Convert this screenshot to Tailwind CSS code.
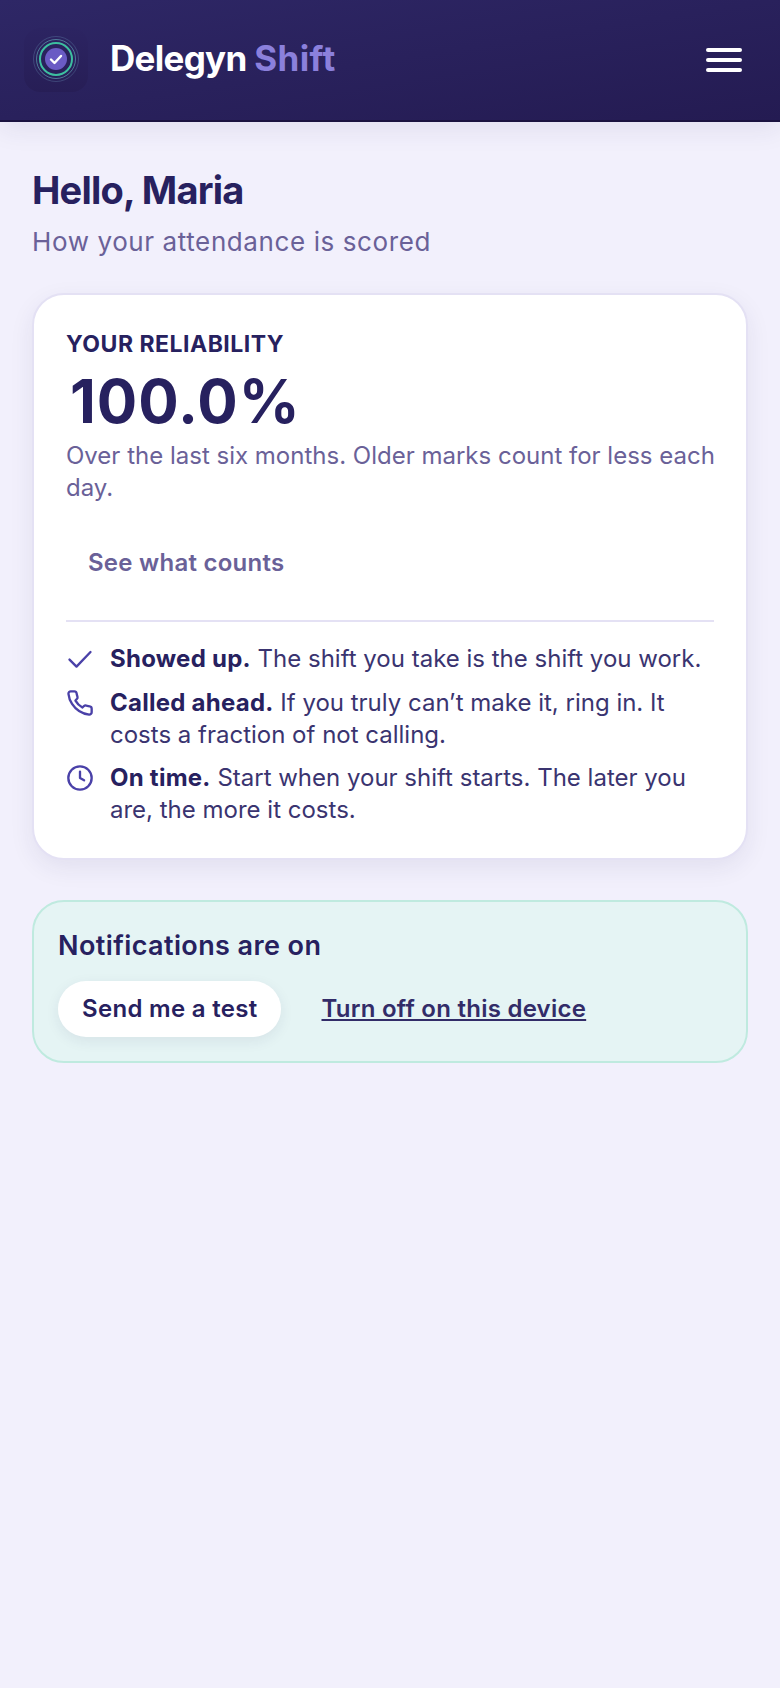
<!DOCTYPE html>
<html lang="en">
  <head>
    <meta charset="UTF-8" />
    <meta name="viewport" content="width=device-width, initial-scale=1.0" />
    <script src="https://cdn.jsdelivr.net/npm/@tailwindcss/browser@4"></script>
    <title>Delegyn Shift</title>
  </head>
  <body class="min-h-[1688px] bg-[#f2f0fc] font-['Inter',sans-serif] text-[#27215f]">
    <!-- Header -->
    <header class="h-[122px] flex items-center justify-between pl-6 pr-[38px] bg-gradient-to-br from-[#2e2766] to-[#241b52] border-b-2 border-[#1a1240] shadow-[0_8px_24px_rgba(39,33,95,0.08)]">
      <div class="flex items-center gap-[22px]">
        <div class="w-16 h-16 rounded-[16px] bg-gradient-to-b from-[#2c2462] to-[#271e56] flex items-center justify-center">
          <svg class="w-[50px] h-[50px] mb-[2px]" viewBox="0 0 50 50" fill="none">
            <circle cx="25" cy="25" r="22.5" stroke="#5f7fa8" stroke-opacity="0.4" stroke-width="1" />
            <circle cx="25" cy="25" r="19.5" stroke="#5f9fb0" stroke-opacity="0.7" stroke-width="1" />
            <circle cx="25" cy="25" r="16" stroke="#3dbfa0" stroke-width="2" />
            <circle cx="25" cy="25" r="11" fill="#6a5bc4" />
            <path d="M20 25.5l3.5 3.5 6.5-7" stroke="#fff" stroke-width="2.4" stroke-linecap="round" stroke-linejoin="round" />
          </svg>
        </div>
        <div class="mb-1 text-[35px] leading-[44px] font-bold tracking-[-0.7px] text-white">Delegyn <span class="tracking-[0.4px] text-[#8b80dc]">Shift</span></div>
      </div>
      <div class="flex flex-col gap-1.5">
        <div class="w-9 h-1 rounded-full bg-white"></div>
        <div class="w-9 h-1 rounded-full bg-white"></div>
        <div class="w-9 h-1 rounded-full bg-white"></div>
      </div>
    </header>

    <main class="px-8 pt-[45px]">
      <h1 class="text-[38px] leading-[46px] font-bold tracking-[-0.8px]">Hello, Maria</h1>
      <p class="mt-[11px] text-[26px] leading-[36px] tracking-[0.6px] text-[#6a6198]">How your attendance is scored</p>

      <!-- Reliability card -->
      <section class="mt-[33px] bg-white rounded-[32px] border-2 border-[#e4e1f4] px-[32px] pt-[35px] pb-[32px] shadow-[0_8px_24px_rgba(39,33,95,0.08)]">
        <div class="text-[23px] leading-[28px] tracking-[0.5px] font-bold">YOUR RELIABILITY</div>
        <div class="mt-[7px] text-[60px] leading-[72px] tracking-[1px] font-bold pl-1">100.0%</div>
        <p class="mt-[3px] -mr-1 text-[24px] leading-[32px] text-[#6a6198]">Over the last six months. Older marks count for less each day.</p>
        <div class="mt-[34px] pl-[22px] text-[24px] leading-[50px] tracking-[0.25px] font-semibold text-[#6a6198]">See what counts</div>
        <div class="mt-[32px] pt-[21px] border-t-2 border-[#e4e1f4] flex flex-col gap-[11.5px]">
          <div class="flex gap-[16px]">
            <svg class="w-7 h-7 mt-[2px] shrink-0" viewBox="0 0 24 24" fill="none" stroke="#4a41a8" stroke-width="2" stroke-linecap="round" stroke-linejoin="round"><path d="M3 12.5l6 6L21 6" /></svg>
            <p class="text-[24px] leading-[32px] text-[#3a3470]"><b class="text-[#27215f] tracking-[0.25px]">Showed up.</b> The shift you take is the shift you work.</p>
          </div>
          <div class="flex gap-[16px]">
            <svg class="w-7 h-7 mt-[2px] shrink-0" viewBox="0 0 24 24" fill="none" stroke="#4a41a8" stroke-width="2" stroke-linecap="round" stroke-linejoin="round"><path d="M22 16.9v3a2 2 0 0 1-2.2 2 19.8 19.8 0 0 1-8.6-3.1 19.5 19.5 0 0 1-6-6 19.8 19.8 0 0 1-3.1-8.7A2 2 0 0 1 4.1 2h3a2 2 0 0 1 2 1.7c.1 1 .4 1.9.7 2.8a2 2 0 0 1-.5 2.1L8.1 9.9a16 16 0 0 0 6 6l1.3-1.3a2 2 0 0 1 2.1-.4c.9.3 1.8.6 2.8.7a2 2 0 0 1 1.7 2z" /></svg>
            <p class="text-[24px] leading-[32px] text-[#3a3470]"><b class="text-[#27215f] tracking-[0.25px]">Called ahead.</b> If you truly can’t make it, ring in. It costs a fraction of not calling.</p>
          </div>
          <div class="flex gap-[16px]">
            <svg class="w-7 h-7 mt-[2px] shrink-0" viewBox="0 0 24 24" fill="none" stroke="#4a41a8" stroke-width="2" stroke-linecap="round" stroke-linejoin="round"><circle cx="12" cy="12" r="10" /><path d="M12 6.5V12l3.5 2" /></svg>
            <p class="text-[24px] leading-[32px] text-[#3a3470]"><b class="text-[#27215f] tracking-[0.25px]">On time.</b> Start when your shift starts. The later you are, the more it costs.</p>
          </div>
        </div>
      </section>

      <!-- Notifications -->
      <section class="mt-[40px] bg-[#e5f4f4] rounded-[32px] border-2 border-[#bfeadf] px-[24px] pt-[27px] pb-[24px]">
        <div class="text-[27px] leading-[34px] tracking-[0.4px] font-semibold">Notifications are on</div>
        <div class="mt-[18px] flex items-center gap-[40px]">
          <div class="h-14 px-[24px] flex items-center rounded-full bg-white text-[24px] tracking-[0.3px] font-semibold shadow-[0_4px_14px_rgba(39,33,95,0.08)]">Send me a test</div>
          <div class="text-[24px] tracking-[0.25px] font-semibold underline text-[#322c68]">Turn off on this device</div>
        </div>
      </section>
    </main>
  </body>
</html>
